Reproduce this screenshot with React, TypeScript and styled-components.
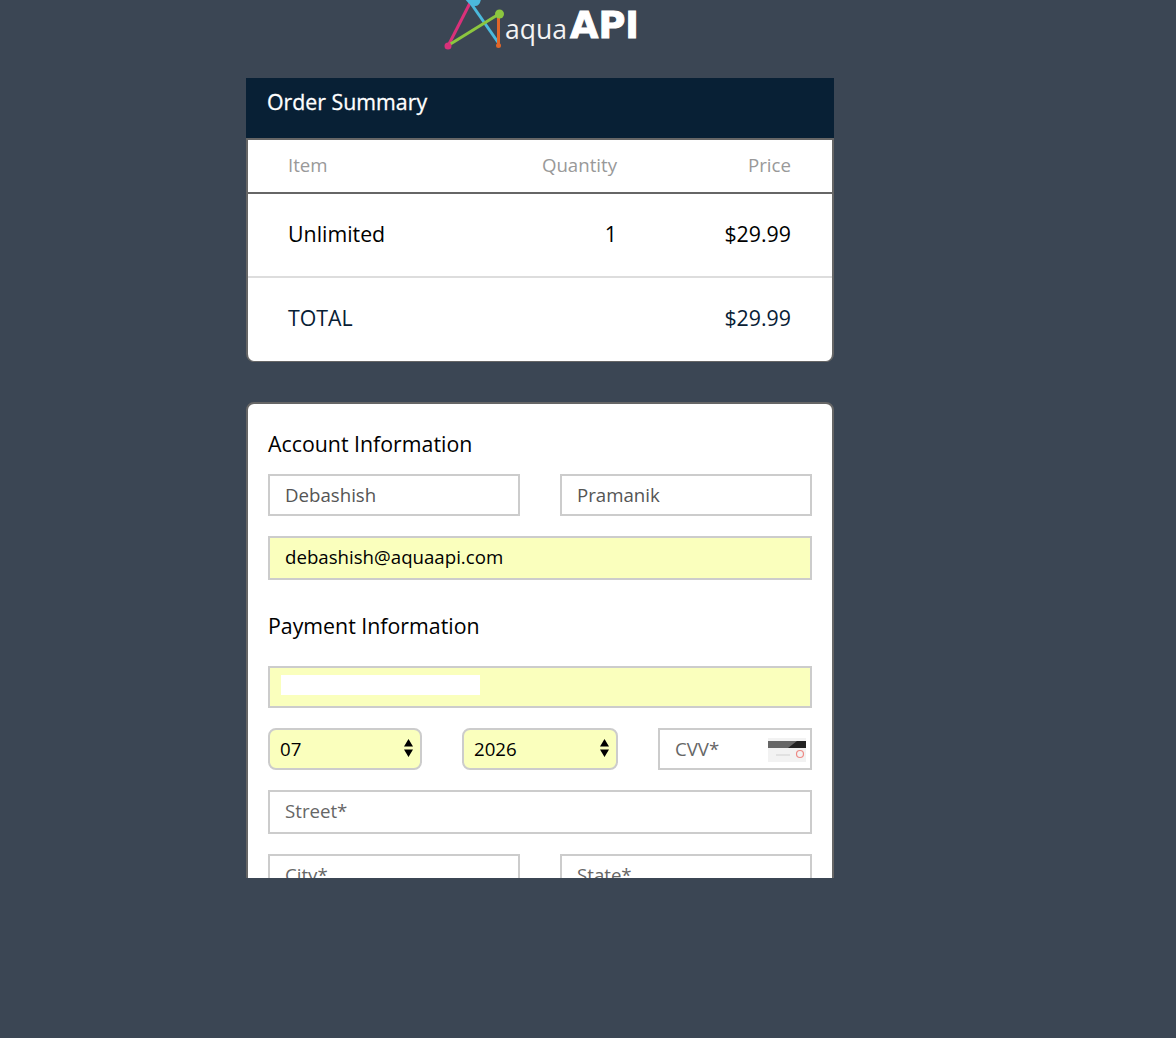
import styled, { createGlobalStyle } from "styled-components";

const GlobalStyle = createGlobalStyle`
  html, body {
    margin: 0;
    padding: 0;
    background: #3b4654;
    font-family: "Open Sans", "Liberation Sans", sans-serif;
  }
`;

const Logo = () => (
  <LogoSvg viewBox="0 0 200 50" width="200" height="50">
    <line x1="4" y1="46" x2="26" y2="3" stroke="#d9317a" strokeWidth="3" />
    <line x1="26" y1="2" x2="54.5" y2="43" stroke="#4bb9dc" strokeWidth="3" />
    <path d="M21 -1 L37 -1 Q36 6 31 6 Q26 6 21 -1 Z" fill="#4bb9dc" />
    <line x1="54.5" y1="18" x2="54.5" y2="44" stroke="#e0662a" strokeWidth="3" />
    <circle cx="54.5" cy="45.5" r="2.5" fill="#e0662a" />
    <line x1="4" y1="45.5" x2="55" y2="14" stroke="#8cc63f" strokeWidth="3" />
    <circle cx="55.5" cy="14" r="4.5" fill="#8cc63f" />
    <circle cx="4" cy="46" r="3.5" fill="#d9317a" />
    <text
      x="61"
      y="39"
      fontFamily="'Open Sans', sans-serif"
      fontSize="27"
      fill="#f4f4f4"
      textLength="62"
      lengthAdjust="spacingAndGlyphs"
    >
      aqua
    </text>
    <text
      x="126"
      y="38"
      fontFamily="'DejaVu Sans', sans-serif"
      fontWeight="700"
      fontSize="38"
      fill="#ffffff"
      stroke="#ffffff"
      strokeWidth="1"
      textLength="69"
      lengthAdjust="spacingAndGlyphs"
    >
      API
    </text>
  </LogoSvg>
);

const SelectArrows = () => (
  <ArrowSvg viewBox="0 0 9 18" width="9" height="18">
    <path d="M4.5 0 L9 7.5 L0 7.5 Z M0 10.5 L9 10.5 L4.5 18 Z" fill="#000" />
  </ArrowSvg>
);

const CvvCard = () => (
  <CardSvg viewBox="0 0 38 24" width="38" height="24">
    <rect width="38" height="24" fill="#f2f2f2" />
    <path d="M0 3 H38 V10 H0 Z" fill="#666" />
    <path d="M20 10 L29 3 H38 V10 Z" fill="#222" />
    <line x1="8" y1="17" x2="22" y2="17" stroke="#d0d0d0" strokeWidth="1" />
    <circle cx="32" cy="16" r="3.5" fill="none" stroke="#ee8a85" strokeWidth="1.2" />
  </CardSvg>
);

export default function App() {
  return (
    <Page>
      <GlobalStyle />
      <Wrapper>
        <LogoRow>
          <Logo />
        </LogoRow>
        <Summary>
          <SummaryHeader>Order Summary</SummaryHeader>
          <SummaryBody>
            <HeadRow>
              <ItemCell>Item</ItemCell>
              <QtyCell>Quantity</QtyCell>
              <PriceCell>Price</PriceCell>
            </HeadRow>
            <ItemRow>
              <ItemCell>Unlimited</ItemCell>
              <QtyCell>1</QtyCell>
              <PriceCell>$29.99</PriceCell>
            </ItemRow>
            <TotalRow>
              <ItemCell>TOTAL</ItemCell>
              <QtyCell />
              <PriceCell>$29.99</PriceCell>
            </TotalRow>
          </SummaryBody>
        </Summary>
        <FormCard>
          <SectionTitle>Account Information</SectionTitle>
          <TwoCols>
            <Field readOnly value="Debashish" />
            <Field readOnly value="Pramanik" />
          </TwoCols>
          <Field $autofill $tall readOnly value="debashish@aquaapi.com" />
          <PaymentTitle>Payment Information</PaymentTitle>
          <CardNumber>
            <MaskedNumber />
          </CardNumber>
          <ThreeCols>
            <SelectBox>
              07
              <SelectArrows />
            </SelectBox>
            <SelectBox>
              2026
              <SelectArrows />
            </SelectBox>
            <CvvBox>
              <Field placeholder="CVV*" readOnly />
              <CvvCard />
            </CvvBox>
          </ThreeCols>
          <Field $tall placeholder="Street*" readOnly />
          <TwoCols>
            <Field placeholder="City*" readOnly />
            <Field placeholder="State*" readOnly />
          </TwoCols>
        </FormCard>
      </Wrapper>
    </Page>
  );
}

const Page = styled.div`
  height: 878px;
  overflow: hidden;
  margin-bottom: 160px;
`;

const Wrapper = styled.div`
  width: 588px;
  margin-left: 246px;
`;

const LogoRow = styled.div`
  display: flex;
  justify-content: center;
  height: 78px;
`;

const LogoSvg = styled.svg`
  display: block;
  margin-left: 8px;
`;

const Summary = styled.div`
  display: flex;
  flex-direction: column;
`;

const SummaryHeader = styled.div`
  height: 60px;
  box-sizing: border-box;
  padding: 10px 21px;
  background: #082035;
  color: #fff;
  font-size: 21.33px;
  line-height: 28px;
  -webkit-text-stroke: 0.3px #fff;
`;

const SummaryBody = styled.div`
  background: #fff;
  border: 2px solid #666;
  border-bottom-width: 1px;
  border-radius: 0 0 8px 8px;
  height: 224px;
  box-sizing: border-box;
`;

const Row = styled.div`
  display: grid;
  grid-template-columns: 1fr 140px 174px;
  padding: 0 41px 4px 40px;
  box-sizing: border-box;
  align-items: center;
`;

const HeadRow = styled(Row)`
  height: 54px;
  border-bottom: 2px solid #666;
  color: #999;
  font-size: 18.67px;
`;

const ItemRow = styled(Row)`
  height: 84px;
  border-bottom: 2px solid #ddd;
  color: #000;
  font-size: 21.33px;
`;

const TotalRow = styled(Row)`
  height: 82px;
  color: #082035;
  font-size: 21.33px;
`;

const ItemCell = styled.div``;

const QtyCell = styled.div`
  text-align: right;
`;

const PriceCell = styled.div`
  text-align: right;
`;

const FormCard = styled.div`
  margin-top: 40px;
  background: #fff;
  border: 2px solid #666;
  border-radius: 8px;
  padding: 25px 20px 30px;
  display: flex;
  flex-direction: column;
  gap: 20px;
`;

const SectionTitle = styled.h3`
  margin: 0 0 -5px;
  font-weight: 400;
  font-size: 21.33px;
  line-height: 30px;
  color: #000;
`;

const PaymentTitle = styled(SectionTitle)`
  margin: 11px 0 5px;
  height: 30px;
`;

const TwoCols = styled.div`
  display: grid;
  grid-template-columns: 1fr 1fr;
  gap: 40px;
`;

const ThreeCols = styled.div`
  display: grid;
  grid-template-columns: 154fr 156fr 154fr;
  gap: 40px;
`;

const Field = styled.input<{ $autofill?: boolean; $tall?: boolean }>`
  display: block;
  width: 100%;
  min-width: 0;
  box-sizing: border-box;
  height: ${(p) => (p.$tall ? "44px" : "42px")};
  padding: 0 15px ${(p) => (p.$tall ? "4px" : "2px")};
  border: 2px solid #ccc;
  border-radius: 0;
  outline: none;
  font-family: inherit;
  font-size: 18.67px;
  background: ${(p) => (p.$autofill ? "#faffbd" : "#fff")};
  color: ${(p) => (p.$autofill ? "#000" : "#555")};

  &::placeholder {
    color: #666;
    opacity: 1;
  }
`;

const CardNumber = styled.div`
  height: 42px;
  box-sizing: border-box;
  border: 2px solid #ccc;
  background: #faffbd;
  padding: 7px 11px;
`;

const MaskedNumber = styled.div`
  width: 199px;
  height: 20px;
  background: #fff;
`;

const SelectBox = styled.div`
  height: 42px;
  box-sizing: border-box;
  border: 2px solid #ccc;
  border-radius: 8px;
  background: #faffbd;
  display: flex;
  align-items: center;
  justify-content: space-between;
  padding: 0 7px 2px 10px;
  font-size: 18.67px;
  color: #000;
`;

const ArrowSvg = styled.svg`
  display: block;
  margin-top: -1px;
`;

const CvvBox = styled.div`
  position: relative;
`;

const CardSvg = styled.svg`
  position: absolute;
  right: 6px;
  top: 10px;
`;
